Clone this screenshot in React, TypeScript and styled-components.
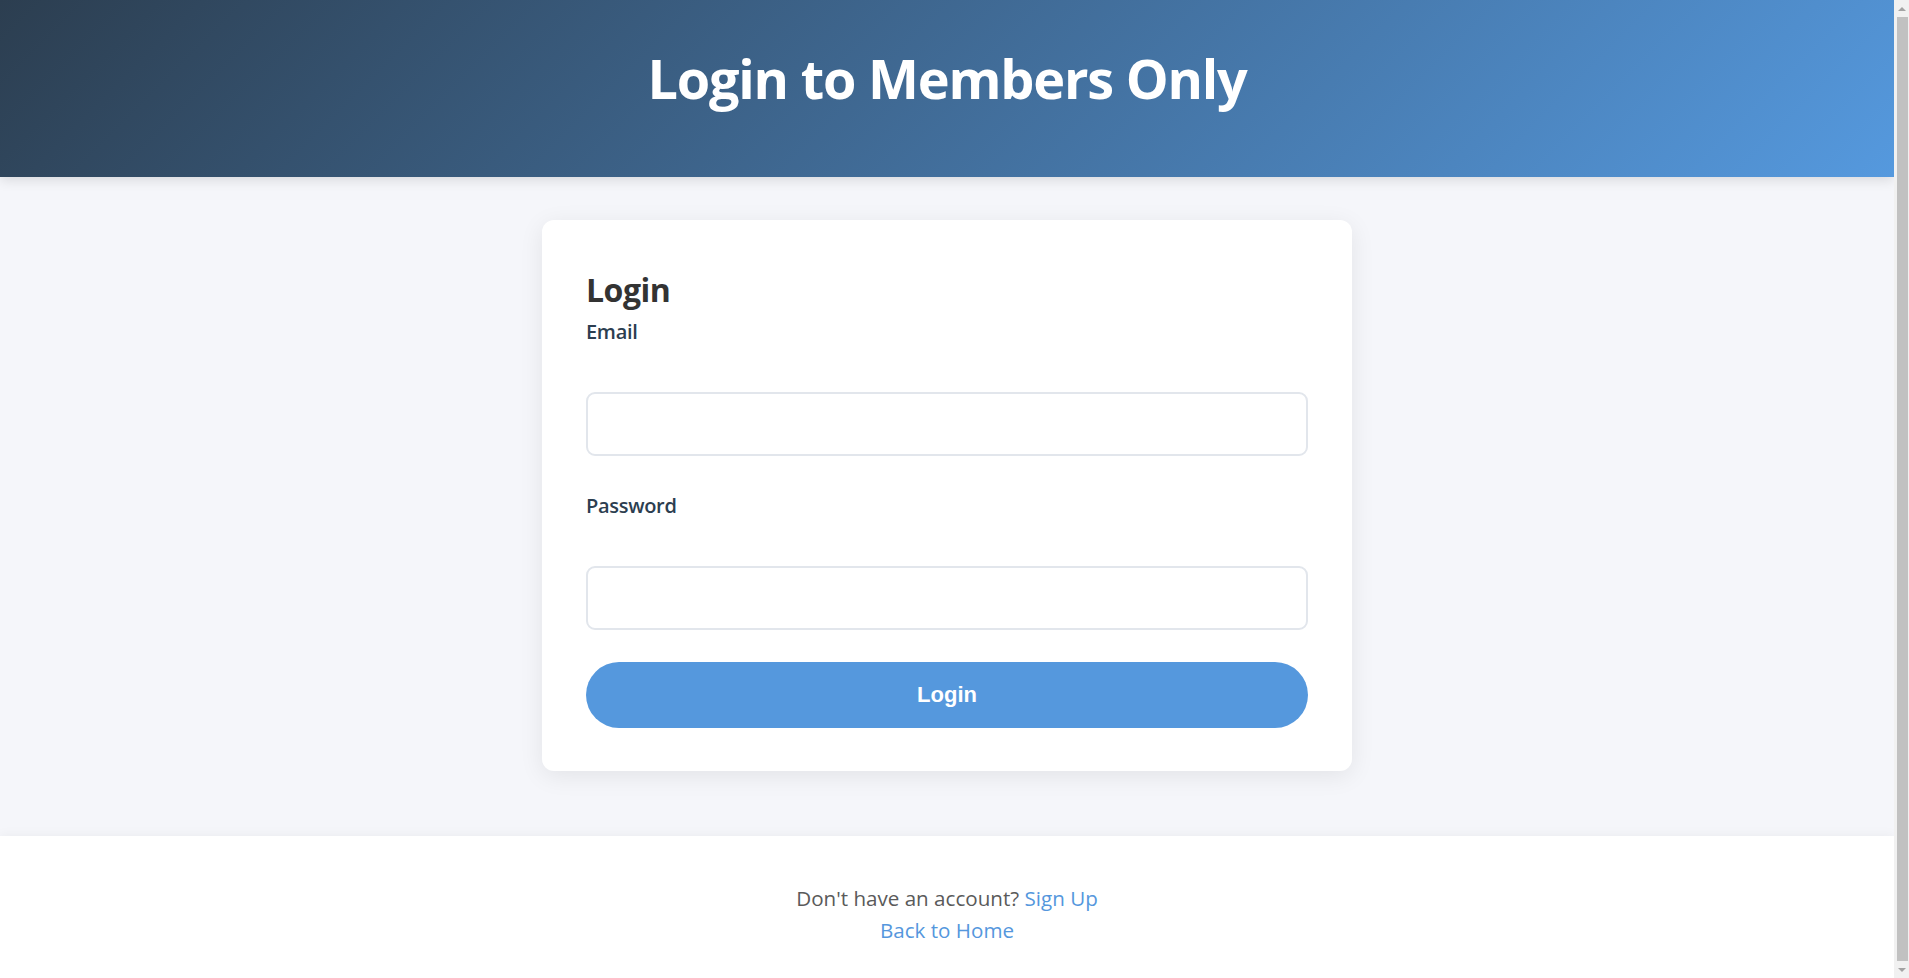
import React from "react";
import styled, { createGlobalStyle } from "styled-components";

const GlobalStyle = createGlobalStyle`
  html, body {
    margin: 0;
    padding: 0;
  }
  body {
    background: #f5f6fa;
    font-family: "Segoe UI", "Open Sans", "Noto Sans", sans-serif;
    color: #333;
  }
  * { box-sizing: border-box; }
`;

const Page = styled.div`
  display: flex;
  flex-direction: column;
  min-height: 100vh;
  margin-right: 15px;
`;

/* Imitation of the browser's classic scrollbar seen at the right edge */
const ScrollTrack = styled.div`
  position: fixed;
  top: 0;
  right: 0;
  bottom: 0;
  width: 15px;
  background: #f1f1f1;
  display: flex;
  flex-direction: column;
  align-items: center;
  z-index: 10;
`;

const ScrollArrow = styled.div<{ $down?: boolean }>`
  height: 17px;
  width: 100%;
  display: flex;
  align-items: center;
  justify-content: center;
  &::before {
    content: "";
    width: 0;
    height: 0;
    border-left: 4px solid transparent;
    border-right: 4px solid transparent;
    ${(p) =>
      p.$down
        ? "border-top: 4px solid #a3a3a3;"
        : "border-bottom: 4px solid #a3a3a3;"}
  }
`;

const ScrollThumb = styled.div`
  flex: 1;
  width: 11px;
  margin-left: 2px;
  background: #c1c1c1;
`;

const Header = styled.header`
  height: 177px;
  padding-top: 46px;
  background: linear-gradient(135deg, #2c3e50 0%, #5599de 100%);
  box-shadow: 0 3px 12px rgba(0, 0, 0, 0.12);
  text-align: center;
  position: relative;
  z-index: 1;
`;

const Title = styled.h1`
  margin: 0;
  font-size: 54px;
  line-height: 65px;
  font-weight: 700;
  color: #fff;
  letter-spacing: -1.2px;
`;

const Main = styled.main`
  display: flex;
  justify-content: center;
  padding: 43px 0 65px;
`;

const Card = styled.div`
  width: 810px;
  background: #fff;
  border-radius: 12px;
  box-shadow: 0 5px 25px rgba(0, 0, 0, 0.08);
  padding: 48px 44px 43px;
`;

const CardTitle = styled.h2`
  margin: 1px 0 3px;
  font-size: 32px;
  line-height: 42px;
  font-weight: 700;
  color: #333;
  letter-spacing: -0.5px;
`;

const Form = styled.form`
  display: flex;
  flex-direction: column;
`;

const Group = styled.div`
  display: flex;
  flex-direction: column;
  margin-bottom: 32px;
`;

const Label = styled.label`
  font-size: 20px;
  line-height: 36px;
  font-weight: 600;
  color: #2c3e50;
  letter-spacing: -0.3px;
  margin-bottom: 42px;
`;

const Input = styled.input`
  height: 64px;
  width: 100%;
  border: 2px solid #e2e6ec;
  border-radius: 9px;
  padding: 0 18px;
  font-size: 20px;
  font-family: inherit;
  outline: none;
  background: #fff;
`;

const SubmitButton = styled.button`
  height: 66px;
  width: 100%;
  border: none;
  border-radius: 40px;
  background: #5598dd;
  color: #fff;
  font-family: "Liberation Sans", Arial, sans-serif;
  font-size: 22px;
  font-weight: 700;
  cursor: pointer;
`;

const Footer = styled.footer`
  background: #fff;
  box-shadow: 0 -2px 10px rgba(0, 0, 0, 0.04);
  padding: 46px 0 44px;
  text-align: center;
  font-size: 20.6px;
  line-height: 32px;
  color: #5a5a5a;
`;

const FooterLine = styled.p`
  margin: 0;
`;

const Link = styled.a`
  color: #5597dd;
  text-decoration: none;
`;

export default function App() {
  return (
    <>
      <GlobalStyle />
      <Page>
        <Header>
          <Title>Login to Members Only</Title>
        </Header>
        <Main>
          <Card>
            <CardTitle>Login</CardTitle>
            <Form onSubmit={(e) => e.preventDefault()}>
              <Group>
                <Label htmlFor="email">Email</Label>
                <Input id="email" type="email" />
              </Group>
              <Group>
                <Label htmlFor="password">Password</Label>
                <Input id="password" type="password" />
              </Group>
              <SubmitButton type="submit">Login</SubmitButton>
            </Form>
          </Card>
        </Main>
        <Footer>
          <FooterLine>
            Don't have an account? <Link href="#">Sign Up</Link>
          </FooterLine>
          <FooterLine>
            <Link href="#">Back to Home</Link>
          </FooterLine>
        </Footer>
      </Page>
      <ScrollTrack aria-hidden="true">
        <ScrollArrow />
        <ScrollThumb />
        <ScrollArrow $down />
      </ScrollTrack>
    </>
  );
}
